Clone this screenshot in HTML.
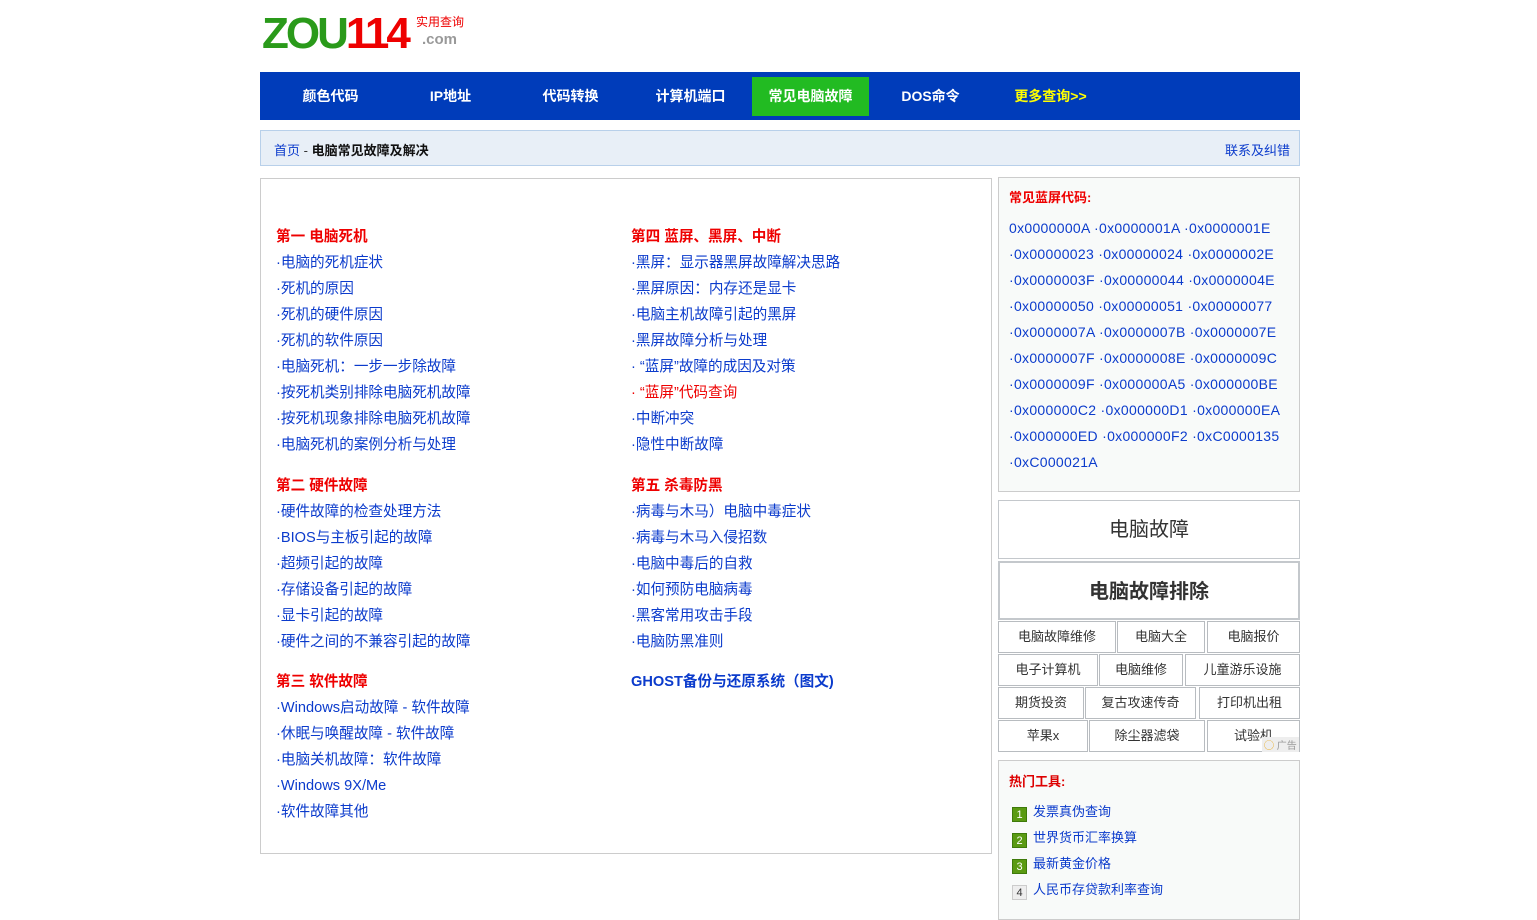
<!DOCTYPE html><html><head><meta charset="utf-8"><style>
body{margin:0;background:#fff;font-family:"Liberation Sans","Noto Sans CJK SC",sans-serif;font-size:14px;color:#333;width:1537px;height:902px;overflow:hidden;position:relative}
.a{position:absolute;white-space:nowrap}
a{color:#0b3bcc;text-decoration:none}
.nav{position:absolute;left:260px;top:72px;width:1040px;height:48px;background:#003cba}
.nav span{position:absolute;top:0;height:48px;line-height:48px;color:#fff;font-weight:bold;font-size:14px;text-align:center;width:117px}
.crumb{position:absolute;left:260px;top:130px;width:1040px;height:36px;background:#e8eff7;border:1px solid #b8d0ea;box-sizing:border-box}
.main{position:absolute;left:260px;top:178px;width:732px;height:676px;border:1px solid #ccc;box-sizing:border-box}
.h{color:#e00;font-weight:bold}
.col{font-size:14.6px}
.bs{position:absolute;left:998px;top:177px;width:302px;height:315px;border:1px solid #ccc;box-sizing:border-box;background:#f8faf9}
.bx{position:absolute;border:2px solid #c4c8cc;box-sizing:border-box;text-align:center;background:#fff;color:#333}
.t{position:absolute;border:1px solid #b8bcc0;box-sizing:border-box;text-align:center;font-size:13px;line-height:30px;height:32px;background:#fff}
.hot{position:absolute;left:998px;top:760px;width:302px;height:160px;border:1px solid #ccc;box-sizing:border-box;background:#f8faf9}
.n{display:inline-block;width:15px;height:15px;line-height:15px;text-align:center;font-size:11px;color:#fff;background:#5a9a12;margin-right:6px;vertical-align:-2px;border:1px solid #3e7a0a;box-sizing:border-box}
</style></head><body>
<div class="a" style="left:262px;top:8px;font:bold 44px/52px 'Liberation Sans',sans-serif;letter-spacing:-3px"><span style="color:#2a9a1a">ZOU</span><span style="color:#e00">114</span></div>
<div class="a" style="left:416px;top:13px;color:#e00;font-size:12px">实用查询</div>
<div class="a" style="left:422px;top:31px;color:#999;font:bold 15px 'Liberation Sans',sans-serif">.com</div>
<div class="nav">
<span style="left:12px">颜色代码</span><span style="left:132px">IP地址</span><span style="left:252px">代码转换</span><span style="left:372px">计算机端口</span>
<span style="left:492px;top:5px;height:39px;line-height:39px;background:#22bb22">常见电脑故障</span>
<span style="left:612px">DOS命令</span><span style="left:732px;color:#ff0">更多查询&gt;&gt;</span></div>
<div class="crumb"><span class="a" style="left:13px;top:9px;font-size:13px"><a>首页</a> - <span style="color:#111;font-weight:bold">电脑常见故障及解决</span></span><span class="a" style="right:9px;top:9px;font-size:13px;color:#0b3bcc">联系及纠错</span></div>
<div class="main"></div>
<div class="a col" style="left:276px;top:224px;line-height:26px">
<div class="h">第一 电脑死机</div><a>·电脑的死机症状</a><br><a>·死机的原因</a><br><a>·死机的硬件原因</a><br><a>·死机的软件原因</a><br><a>·电脑死机：一步一步除故障</a><br><a>·按死机类别排除电脑死机故障</a><br><a>·按死机现象排除电脑死机故障</a><br><a>·电脑死机的案例分析与处理</a>
<div class="h" style="margin-top:15px">第二 硬件故障</div><a>·硬件故障的检查处理方法</a><br><a>·BIOS与主板引起的故障</a><br><a>·超频引起的故障</a><br><a>·存储设备引起的故障</a><br><a>·显卡引起的故障</a><br><a>·硬件之间的不兼容引起的故障</a>
<div class="h" style="margin-top:14px">第三 软件故障</div><a>·Windows启动故障 - 软件故障</a><br><a>·休眠与唤醒故障 - 软件故障</a><br><a>·电脑关机故障：软件故障</a><br><a>·Windows 9X/Me</a><br><a>·软件故障其他</a></div>
<div class="a col" style="left:631px;top:224px;line-height:26px">
<div class="h">第四 蓝屏、黑屏、中断</div><a>·黑屏：显示器黑屏故障解决思路</a><br><a>·黑屏原因：内存还是显卡</a><br><a>·电脑主机故障引起的黑屏</a><br><a>·黑屏故障分析与处理</a><br><a>· “蓝屏”故障的成因及对策</a><br><a style="color:#e00">· “蓝屏”代码查询</a><br><a>·中断冲突</a><br><a>·隐性中断故障</a>
<div class="h" style="margin-top:15px">第五 杀毒防黑</div><a>·病毒与木马）电脑中毒症状</a><br><a>·病毒与木马入侵招数</a><br><a>·电脑中毒后的自救</a><br><a>·如何预防电脑病毒</a><br><a>·黑客常用攻击手段</a><br><a>·电脑防黑准则</a>
<div style="margin-top:14px;font-weight:bold;color:#0b3bcc">GHOST备份与还原系统（图文)</div></div>
<div class="bs"><div class="a" style="left:10px;top:9px;color:#e00;font-weight:bold;font-size:13px">常见蓝屏代码:</div>
<div class="a" style="left:10px;top:37px;line-height:26px;color:#0b3bcc;letter-spacing:.3px">0x0000000A ·0x0000001A ·0x0000001E<br>·0x00000023 ·0x00000024 ·0x0000002E<br>·0x0000003F ·0x00000044 ·0x0000004E<br>·0x00000050 ·0x00000051 ·0x00000077<br>·0x0000007A ·0x0000007B ·0x0000007E<br>·0x0000007F ·0x0000008E ·0x0000009C<br>·0x0000009F ·0x000000A5 ·0x000000BE<br>·0x000000C2 ·0x000000D1 ·0x000000EA<br>·0x000000ED ·0x000000F2 ·0xC0000135<br>·0xC000021A</div></div>
<div class="bx" style="left:998px;top:500px;width:302px;height:59px;line-height:59px;font-size:20px;border-width:1px">电脑故障</div>
<div class="bx" style="left:998px;top:561px;width:302px;height:59px;line-height:59px;font-size:20px;font-weight:bold">电脑故障排除</div>
<div class="t" style="left:998px;top:621px;width:118px">电脑故障维修</div><div class="t" style="left:1117px;top:621px;width:88px">电脑大全</div><div class="t" style="left:1207px;top:621px;width:93px">电脑报价</div>
<div class="t" style="left:998px;top:654px;width:100px">电子计算机</div><div class="t" style="left:1099px;top:654px;width:84px">电脑维修</div><div class="t" style="left:1185px;top:654px;width:115px">儿童游乐设施</div>
<div class="t" style="left:998px;top:687px;width:86px">期货投资</div><div class="t" style="left:1085px;top:687px;width:111px">复古攻速传奇</div><div class="t" style="left:1199px;top:687px;width:101px">打印机出租</div>
<div class="t" style="left:998px;top:720px;width:90px">苹果x</div><div class="t" style="left:1089px;top:720px;width:116px">除尘器滤袋</div><div class="t" style="left:1207px;top:720px;width:93px">试验机</div>
<div class="a" style="left:1262px;top:737px;font-size:10px;color:#999;background:#eee;padding:0 2px"><span style="color:#e8a000">◯</span> 广告</div>
<div class="hot"><div class="a" style="left:10px;top:10px;color:#d00;font-weight:bold;font-size:13px">热门工具:</div>
<div class="a" style="left:13px;top:38px;line-height:26px;font-size:13px;color:#0b3bcc"><span class="n">1</span>发票真伪查询<br><span class="n">2</span>世界货币汇率换算<br><span class="n">3</span>最新黄金价格<br><span class="n" style="background:#eee;color:#333;border-color:#ccc">4</span>人民币存贷款利率查询</div></div>
</body></html>
